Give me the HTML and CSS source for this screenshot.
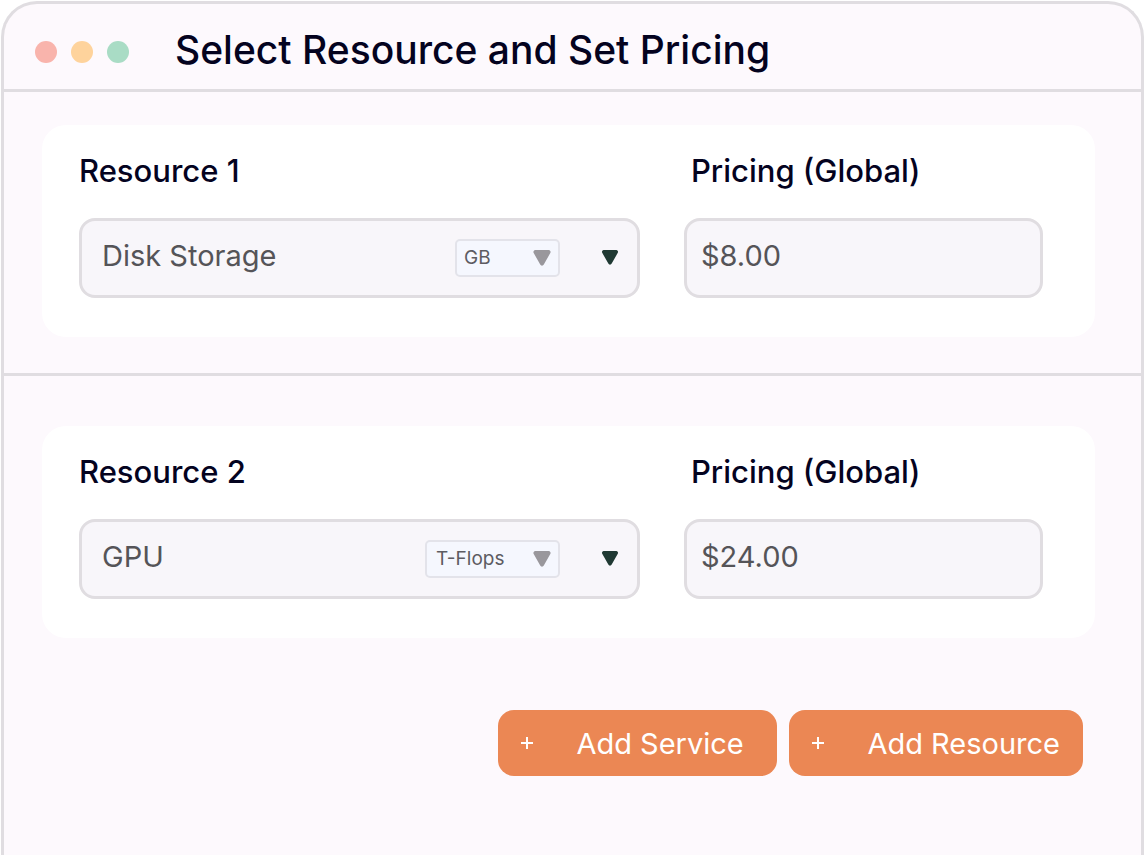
FILE: index.html
```html
<!DOCTYPE html>
<html lang="en">
<head>
	<meta charset="UTF-8">
	<meta name="viewport" content="width=device-width, initial-scale=1">
	<title>Select Resource and Set Pricing</title>
	<link rel="stylesheet" href="styles.css">
</head>
<body>
	<div class="window">
		<header class="titlebar">
			<div class="dots">
				<span class="dot red"></span>
				<span class="dot yellow"></span>
				<span class="dot green"></span>
			</div>
			<h1>Select Resource and Set Pricing</h1>
		</header>
		<main>
			<section class="resource">
				<div class="card">
					<div class="col">
						<label for="resource1">Resource 1</label>
						<div class="picker">
							<select class="field" id="resource1">
								<option>Disk Storage</option>
							</select>
							<select class="unit" aria-label="Resource 1 unit">
								<option>GB</option>
							</select>
							<svg class="arrow gray" viewBox="0 0 18 16"><path d="M2.5 0h13a2 2 0 0 1 1.8 3l-6.5 11.5a2 2 0 0 1-3.6 0L.7 3a2 2 0 0 1 1.8-3z"/></svg>
							<svg class="arrow dark" viewBox="0 0 18 16"><path d="M2.5 0h13a2 2 0 0 1 1.8 3l-6.5 11.5a2 2 0 0 1-3.6 0L.7 3a2 2 0 0 1 1.8-3z"/></svg>
						</div>
					</div>
					<div class="col price">
						<label for="price1">Pricing (Global)</label>
						<input class="field" id="price1" type="text" value="$8.00">
					</div>
				</div>
			</section>
			<section class="resource">
				<div class="card">
					<div class="col">
						<label for="resource2">Resource 2</label>
						<div class="picker">
							<select class="field" id="resource2">
								<option>GPU</option>
							</select>
							<select class="unit wide" aria-label="Resource 2 unit">
								<option>T-Flops</option>
							</select>
							<svg class="arrow gray" viewBox="0 0 18 16"><path d="M2.5 0h13a2 2 0 0 1 1.8 3l-6.5 11.5a2 2 0 0 1-3.6 0L.7 3a2 2 0 0 1 1.8-3z"/></svg>
							<svg class="arrow dark" viewBox="0 0 18 16"><path d="M2.5 0h13a2 2 0 0 1 1.8 3l-6.5 11.5a2 2 0 0 1-3.6 0L.7 3a2 2 0 0 1 1.8-3z"/></svg>
						</div>
					</div>
					<div class="col price">
						<label for="price2">Pricing (Global)</label>
						<input class="field" id="price2" type="text" value="$24.00">
					</div>
				</div>
			</section>
			<div class="actions">
				<button type="button"><svg class="plus" viewBox="0 0 12 12"><path d="M6 0v12M0 6h12"/></svg>Add Service</button>
				<button type="button"><svg class="plus" viewBox="0 0 12 12"><path d="M6 0v12M0 6h12"/></svg>Add Resource</button>
			</div>
		</main>
	</div>
</body>
</html>
```

FILE: styles.css
```css
* {
	box-sizing: border-box;
}
body {
	margin: 0;
	background: #fff;
	color: #04031f;
	font-family: Inter, "Liberation Sans", sans-serif;
}
.window {
	min-height: calc(100vh - 1px);
	margin: 1px 2px 0 1px;
	border: 3px solid #e0dde1;
	border-bottom: 0;
	border-radius: 36px 36px 0 0;
	background: #fdf9fd;
}

/* title bar */
.titlebar {
	display: flex;
	align-items: center;
	gap: 46px;
	min-height: 88px;
	padding: 10px 31px 0;
	border-bottom: 3px solid #e0dde1;
}
.dots {
	display: flex;
	gap: 14px;
}
.dot {
	width: 22px;
	height: 22px;
	border-radius: 50%;
}
.red {
	background: #f9b4ac;
}
.yellow {
	background: #fed39c;
}
.green {
	background: #a9dcc5;
}
h1 {
	margin: 0;
	padding-bottom: 4px;
	font-size: 39px;
	font-weight: 500;
	line-height: 48px;
}

/* resource rows */
.resource {
	padding: 33px 46px 36px 38px;
}
.resource + .resource {
	padding-top: 50px;
	border-top: 3px solid #e0dde1;
}
.card {
	display: grid;
	grid-template-columns: 25fr 16fr;
	gap: 44px;
	padding: 25px 52px 39px 37px;
	border-radius: 24px;
	background: #fff;
}
.col {
	display: flex;
	flex-direction: column;
	gap: 26px;
	min-width: 0;
}
label {
	font-size: 31px;
	font-weight: 500;
	line-height: 42px;
}
.price label {
	padding-left: 7px;
}
.field {
	width: 100%;
	height: 80px;
	padding: 0 20px 6px;
	border: 3px solid #e0dde1;
	border-radius: 16px;
	background: #f8f6fa;
	color: #555458;
	font-family: inherit;
	font-size: 29px;
	appearance: none;
}
.price .field {
	padding-left: 14px;
}

/* the unit box and both arrows share one grid cell with the main select */
.picker {
	display: grid;
	align-items: center;
}
.picker > * {
	grid-area: 1 / 1;
}
.unit {
	justify-self: end;
	width: 105px;
	height: 38px;
	margin-right: 80px;
	padding: 0 7px 2px;
	border: 2px solid #e3e3ea;
	border-radius: 5px;
	background: #f5f7fe;
	color: #5d5c62;
	font-family: inherit;
	font-size: 19px;
	appearance: none;
}
.wide {
	width: 135px;
	padding-left: 9px;
}
.arrow {
	justify-self: end;
	width: 18px;
	height: 16px;
	pointer-events: none;
}
.gray {
	margin-right: 89px;
	fill: #99979c;
}
.dark {
	margin-right: 21px;
	padding-bottom: 1px;
	fill: #203933;
}

/* buttons */
.actions {
	display: flex;
	flex-wrap: wrap;
	justify-content: flex-end;
	gap: 12px;
	padding: 36px 58px;
}
.actions button {
	display: flex;
	align-items: center;
	gap: 43px;
	min-width: 279px;
	height: 66px;
	padding: 0 23px;
	border: 0;
	border-radius: 16px;
	background: #eb8754;
	color: #fff;
	font-family: inherit;
	font-size: 29px;
}
.plus {
	width: 12px;
	height: 12px;
	fill: none;
	stroke: #fff;
	stroke-width: 2;
}
```
